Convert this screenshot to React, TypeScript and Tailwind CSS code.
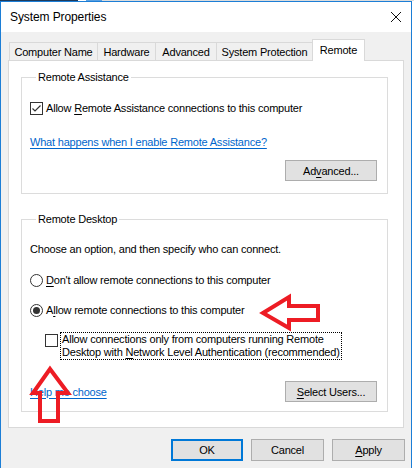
import React from "react";

function Check({ checked }: { checked?: boolean }) {
  return (
    <span className="w-[13px] h-[13px] border border-[#333333] bg-white flex items-center justify-center shrink-0">
      {checked && (
        <svg width="11" height="11" viewBox="0 0 11 11">
          <path d="M1.5 5.5 L4 8 L9.5 2.5" stroke="#333333" strokeWidth="1.2" fill="none" />
        </svg>
      )}
    </span>
  );
}

function Radio({ checked }: { checked?: boolean }) {
  return (
    <span className="w-[13px] h-[13px] rounded-full border border-[#333333] bg-white flex items-center justify-center shrink-0">
      {checked && <span className="w-[7px] h-[7px] rounded-full bg-[#333333]" />}
    </span>
  );
}

function U({ children }: { children: React.ReactNode }) {
  return <span className="underline underline-offset-2 decoration-1">{children}</span>;
}

function Btn({ children, primary, w, h }: { children: React.ReactNode; primary?: boolean; w: string; h: string }) {
  return (
    <div
      className={`${w} ${h} flex items-center justify-center bg-[#e1e1e1] ${
        primary ? "border-2 border-[#0078d7]" : "border border-[#adadad]"
      }`}
    >
      {children}
    </div>
  );
}

export default function App() {
  return (
    <div className="w-[414px] h-[468px] bg-white relative overflow-hidden font-['Liberation_Sans',Arial,sans-serif] text-[11px] tracking-[-0.2px] leading-[16px] text-black whitespace-nowrap">
      {/* strip above window */}
      <div className="h-px flex">
        <div className="w-[78px] bg-[#1f3a5a]" />
        <div className="w-[8px] bg-white" />
        <div className="w-[16px] bg-[#5aa0e0]" />
        <div className="flex-1 bg-[#dcdcdc]" />
      </div>
      <div className="w-[412px] h-[467px] border-t border-l border-r border-[#1c7ed6] flex flex-col">
        {/* title bar */}
        <div className="h-[30px] bg-white flex items-center justify-between pl-[9px] pr-[9px] shrink-0">
          <span className="text-[12px] tracking-[-0.1px]">System Properties</span>
          <svg width="12" height="12" viewBox="0 0 12 12">
            <path d="M1 1 L11 11 M11 1 L1 11" stroke="#111" strokeWidth="1" />
          </svg>
        </div>
        {/* body */}
        <div className="flex-1 bg-[#f0f0f0] px-[7px] pt-[7px]">
          {/* tabs */}
          <div className="flex items-end h-[21px] pl-px">
            <div className="w-[88px] h-[18px] border-l border-t border-[#d9d9d9] flex items-center justify-center">Computer Name</div>
            <div className="w-[58px] h-[18px] border-l border-t border-[#d9d9d9] flex items-center justify-center">Hardware</div>
            <div className="w-[61px] h-[18px] border-l border-t border-[#d9d9d9] flex items-center justify-center">Advanced</div>
            <div className="w-[96px] h-[18px] border-l border-t border-[#d9d9d9] flex items-center justify-center">System Protection</div>
            <div className="w-[53px] h-[22px] -mb-px relative z-10 bg-white border-l border-t border-r border-[#d9d9d9] flex items-center justify-center pb-[2px]">
              Remote
            </div>
          </div>
          {/* panel */}
          <div className="w-[396px] h-[368px] border border-[#d9d9d9] bg-white pl-[12px] pt-[8px]">
            <fieldset className="w-[367px] border border-[#dcdcdc] pl-[8px] pb-[12px]">
              <legend className="ml-[6px] px-[2px] h-[16px]">Remote Assistance</legend>
              <div className="flex items-center h-[16px] mt-[15px] gap-[3px]">
                <Check checked />
                <span>
                  Allow <U>R</U>emote Assistance connections to this computer
                </span>
              </div>
              <div className="h-[16px] mt-[18px]">
                <span className="text-[#0066cc] underline decoration-1 underline-offset-2">What happens when I enable Remote Assistance?</span>
              </div>
              <div className="flex justify-end pr-[10px] mt-[10px]">
                <Btn w="w-[92px]" h="h-[21px]">
                  Ad<U>v</U>anced...
                </Btn>
              </div>
            </fieldset>

            <fieldset className="w-[367px] border border-[#dcdcdc] pl-[8px] pb-[9px] mt-[17px]">
              <legend className="ml-[6px] px-[2px] h-[16px]">Remote Desktop</legend>
              <div className="h-[16px] mt-[14px]">Choose an option, and then specify who can connect.</div>
              <div className="flex items-center h-[16px] mt-[15px] gap-[3px]">
                <Radio />
                <span>
                  <U>D</U>on't allow remote connections to this computer
                </span>
              </div>
              <div className="flex items-center h-[16px] mt-[14px] gap-[3px]">
                <Radio checked />
                <span>
                  A<U>l</U>low remote connections to this computer
                </span>
              </div>
              <div className="flex items-start mt-[14px] pl-[15px] gap-[2px]">
                <span className="mt-[2px]">
                  <Check />
                </span>
                <div className="border border-dotted border-black leading-[13px] px-px">
                  Allow connections only from computers running Remote
                  <br />
                  Desktop with <U>N</U>etwork Level Authentication (recommended)
                </div>
              </div>
              <div className="flex items-center justify-between pr-[10px] mt-[21px]">
                <span className="text-[#0066cc] underline decoration-1 underline-offset-2">Help me choose</span>
                <Btn w="w-[92px]" h="h-[21px]">
                  <U>S</U>elect Users...
                </Btn>
              </div>
            </fieldset>
          </div>
          {/* bottom buttons */}
          <div className="flex justify-end gap-[8px] mt-[11px] w-[397px]">
            <Btn w="w-[72px]" h="h-[22px]" primary>
              OK
            </Btn>
            <Btn w="w-[73px]" h="h-[22px]">Cancel</Btn>
            <Btn w="w-[73px]" h="h-[22px]">
              <U>A</U>pply
            </Btn>
          </div>
        </div>
      </div>
      {/* red arrows overlay */}
      <svg className="absolute left-0 top-0 pointer-events-none" width="414" height="468" viewBox="0 0 414 468">
        <polygon
          points="263,313 289,297 289,306 318,306 318,320 289,320 289,328"
          fill="none"
          stroke="#ed1c24"
          strokeWidth="4"
          strokeLinejoin="miter"
        />
        <polygon
          points="50,369 68,393 58,393 58,421 40,421 40,393 33,393"
          fill="none"
          stroke="#ed1c24"
          strokeWidth="4"
          strokeLinejoin="miter"
        />
      </svg>
    </div>
  );
}
